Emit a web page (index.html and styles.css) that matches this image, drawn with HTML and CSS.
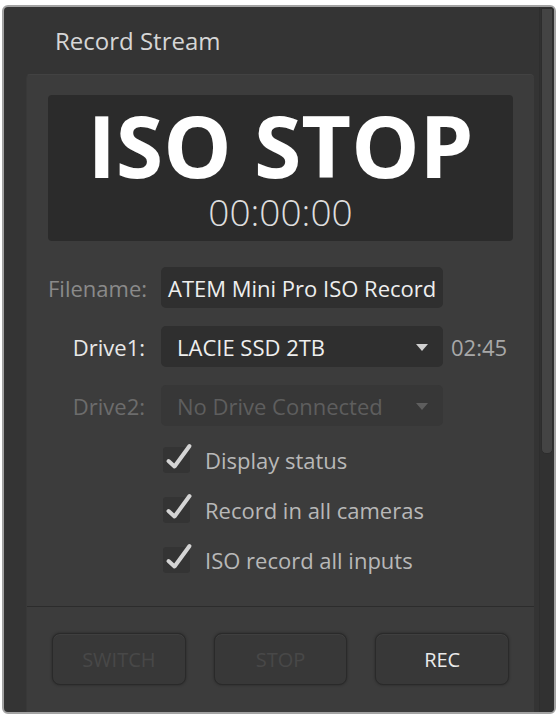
FILE: index.html
```html
<!DOCTYPE html>
<html lang="en">
<head>
    <meta charset="UTF-8">
    <meta name="viewport" content="width=device-width, initial-scale=1.0">
    <title>Record Stream</title>
    <link rel="stylesheet" href="styles.css">
</head>
<body>
    <div class="window">
        <div class="main">
            <!-- Title -->
            <div class="title">Record Stream</div>

            <div class="panel">
                <div class="settings">
                    <!-- Status display -->
                    <div class="display">
                        <div class="status">ISO STOP</div>
                        <div class="timecode">00:00:00</div>
                    </div>

                    <!-- Filename and drives -->
                    <div class="fields">
                        <div class="row">
                            <span class="label">Filename:</span>
                            <div class="box filename">ATEM Mini Pro ISO Record</div>
                        </div>
                        <div class="row">
                            <span class="label active">Drive1:</span>
                            <div class="box select">
                                <span>LACIE SSD 2TB</span>
                                <span class="arrow"></span>
                            </div>
                            <span class="remaining">02:45</span>
                        </div>
                        <div class="row">
                            <span class="label disabled">Drive2:</span>
                            <div class="box select off">
                                <span>No Drive Connected</span>
                                <span class="arrow"></span>
                            </div>
                        </div>
                    </div>

                    <!-- Options -->
                    <div class="options">
                        <div class="check">
                            <span class="tick"><svg viewBox="0 0 26 26"><path d="M5.5 14 L11.5 19.5 L26.5 -1"/></svg></span>
                            <span>Display status</span>
                        </div>
                        <div class="check">
                            <span class="tick"><svg viewBox="0 0 26 26"><path d="M5.5 14 L11.5 19.5 L26.5 -1"/></svg></span>
                            <span>Record in all cameras</span>
                        </div>
                        <div class="check">
                            <span class="tick"><svg viewBox="0 0 26 26"><path d="M5.5 14 L11.5 19.5 L26.5 -1"/></svg></span>
                            <span>ISO record all inputs</span>
                        </div>
                    </div>
                </div>

                <!-- Buttons -->
                <div class="buttons">
                    <button class="btn" disabled>SWITCH</button>
                    <button class="btn" disabled>STOP</button>
                    <button class="btn on">REC</button>
                </div>
            </div>
        </div>

        <div class="scrollbar">
            <div class="thumb"></div>
        </div>
    </div>
</body>
</html>
```

FILE: styles.css
```css
/* General */
body {
    margin: 0;
    background: #ffffff;
    font-family: 'Open Sans', 'DejaVu Sans', sans-serif;
}

/* Window frame */
.window {
    margin: 5px 0 0 2px;
    width: 554px;
    height: 709px;
    box-sizing: border-box;
    border: 2px solid #a3a3a3;
    border-radius: 6px;
    background: #343434;
    display: flex;
    overflow: hidden;
}

.main {
    flex: 1;
    display: flex;
    flex-direction: column;
}

.title {
    padding: 22px 0 21px 51px;
    font-size: 24px;
    line-height: 24px;
    color: #d6d6d6;
}

/* Inner panel */
.panel {
    flex: 1;
    margin: 0 5px 0 22px;
    background: #3c3c3c;
    border-left: 1px solid #383838;
    border-top: 1px solid #424242;
    border-radius: 4px 4px 0 0;
    display: flex;
    flex-direction: column;
}

.settings {
    padding: 20px 21px 33px 21px;
    border-bottom: 1px solid #2c2c2c;
}

/* Status display */
.display {
    background: #2b2b2b;
    border-radius: 4px;
    padding: 7px 0 11px;
    text-align: center;
}

.status {
    font-size: 86px;
    line-height: 86px;
    font-weight: 700;
    color: #ffffff;
}

.timecode {
    margin-top: 5px;
    font-size: 37px;
    line-height: 37px;
    font-weight: 300;
    color: #dedede;
}

/* Fields */
.fields {
    margin-top: 26px;
    display: flex;
    flex-direction: column;
    gap: 18px;
}

.row {
    display: flex;
    align-items: center;
    font-size: 22px;
}

.label {
    width: 97px;
    margin-right: 16px;
    text-align: right;
    white-space: nowrap;
    color: #8a8a8a;
}

.label.active {
    color: #e8e8e8;
}

.label.disabled {
    color: #6c6c6c;
}

.box {
    width: 282px;
    height: 41px;
    box-sizing: border-box;
    background: #2f2f2f;
    border-radius: 5px;
    display: flex;
    align-items: center;
    white-space: nowrap;
    color: #eeeeee;
}

.filename {
    padding-left: 7px;
}

.select {
    padding: 0 15px 0 16px;
    justify-content: space-between;
}

.select.off {
    background: #373737;
    color: #5e5e5e;
}

.arrow {
    width: 0;
    height: 0;
    border-left: 6px solid transparent;
    border-right: 6px solid transparent;
    border-top: 7px solid #d0d0d0;
    margin-top: 2px;
}

.select.off .arrow {
    border-top-color: #5e5e5e;
}

.remaining {
    margin-left: 8px;
    color: #a8a8a8;
    font-size: 22px;
}

/* Options */
.options {
    margin: 21px 0 0 115px;
    display: flex;
    flex-direction: column;
    gap: 24px;
}

.check {
    display: flex;
    align-items: center;
    gap: 15px;
    font-size: 22px;
    color: #b8b8b8;
    height: 26px;
}

.tick {
    width: 27px;
    height: 26px;
    background: #343434;
    border-radius: 3px;
}

.tick svg {
    width: 26px;
    height: 26px;
    overflow: visible;
}

.tick path {
    fill: none;
    stroke: #d4d4d4;
    stroke-width: 4;
    stroke-linecap: round;
    stroke-linejoin: round;
}

/* Buttons */
.buttons {
    padding: 26px 25px 0 25px;
    display: flex;
    gap: 28px;
}

.btn {
    flex: 1;
    height: 52px;
    background: #383838;
    border: 1px solid #2a2a2a;
    border-radius: 8px;
    box-shadow: 0 0 3px rgba(0, 0, 0, 0.35), inset 0 1px 0 rgba(255, 255, 255, 0.04);
    font-family: 'Open Sans', sans-serif;
    font-size: 20px;
    color: #484848;
}

.btn.on {
    color: #eaeaea;
}

/* Scrollbar */
.scrollbar {
    width: 15px;
    background: #313131;
    border-left: 1px solid #2e2e2e;
    box-sizing: border-box;
    padding: 1px 1px 0 1px;
}

.thumb {
    height: 444px;
    background: #444444;
    border: 1px solid #2d2d2d;
    border-radius: 0 0 5px 5px;
}
```
